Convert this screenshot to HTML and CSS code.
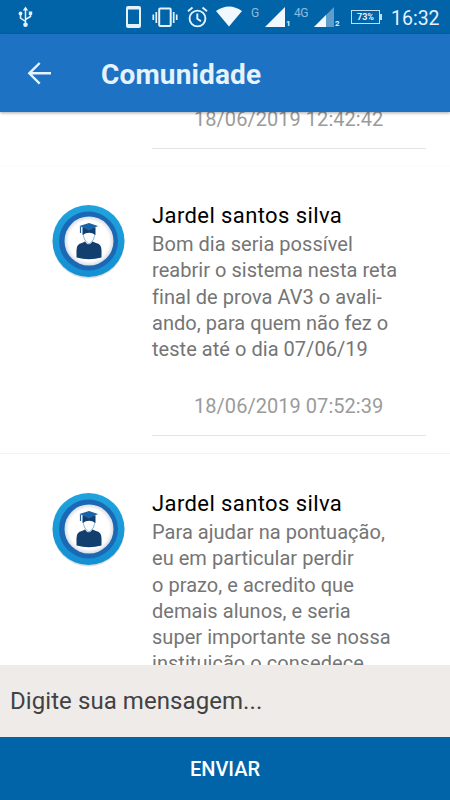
FILE: index.html
```html
<!DOCTYPE html>
<html lang="pt-BR">
<head>
    <meta charset="UTF-8">
    <meta name="viewport" content="width=device-width, initial-scale=1.0">
    <title>Comunidade</title>
    <link rel="stylesheet" href="styles.css">
</head>
<body>
    <svg class="defs" width="0" height="0">
        <defs>
            <linearGradient id="ring" x1="0" y1="0" x2="0" y2="1">
                <stop offset="0" stop-color="#1fa3dd"/>
                <stop offset="1" stop-color="#158fd2"/>
            </linearGradient>
            <radialGradient id="disc">
                <stop offset="0.82" stop-color="#ffffff"/>
                <stop offset="1" stop-color="#d9dde4"/>
            </radialGradient>
            <symbol id="student" viewBox="0 0 74 76">
                <circle cx="37.500" cy="38.500" r="36" fill="#9aa5ad" opacity="0.35"/>
                <circle cx="37.500" cy="37" r="36" fill="url(#ring)"/>
                <circle cx="37.500" cy="37" r="29.500" fill="#1b69b5"/>
                <circle cx="38" cy="37" r="24.500" fill="url(#disc)"/>
                <path d="M25.500 53.500 V46 Q25.500 40 31 39 L34 37.500 Q37.500 43 41.500 37.500 L45 39 Q50.500 40 50.500 46 V53.500 Q38 57 25.500 53.500Z" fill="#123f6d"/>
                <path d="M32.500 28 Q31.500 36 38 40 Q44.500 36 43.500 28" fill="#fff" stroke="#6aa5d4" stroke-width="0.800"/>
                <path d="M31.500 23.500 H44.500 V31 Q38 26.500 31.500 31Z" fill="#123f6d"/>
                <path d="M28.500 22 L38 19 L47 22 L38 26.500Z" fill="#1b62a8"/>
                <path d="M29.500 22.500 V29" stroke="#1b62a8" stroke-width="1.200"/>
            </symbol>
        </defs>
    </svg>

    <div class="screen">
        <div class="status-bar">
            <svg class="usb" width="15" height="22" viewBox="0 0 15 22" fill="none" stroke="#e3f2fd" stroke-width="1.500">
                <path d="M7.500 18V3M7.500 15.500L2.500 12V8M7.500 13.500L12.500 10.500V7"/>
                <path d="M4.800 4.500L7.500 0.500L10.200 4.500Z" fill="#e3f2fd" stroke="none"/>
                <circle cx="7.500" cy="18.800" r="2.300" fill="#e3f2fd" stroke="none"/>
                <circle cx="2.500" cy="7.500" r="1.900" fill="#e3f2fd" stroke="none"/>
                <path d="M10.800 5.500h3.400v3.400h-3.400z" fill="#e3f2fd" stroke="none"/>
            </svg>
            <svg class="phone" width="15" height="23" viewBox="0 0 15 23">
                <path fill="#e3f2fd" fill-rule="evenodd" d="M2 0H13Q15 0 15 2V20Q15 22 13 22H2Q0 22 0 20V2Q0 0 2 0ZM2 3.500V18H13V3.500Z"/>
            </svg>
            <svg class="vibrate" width="26" height="22" viewBox="0 0 26 22" fill="none" stroke="#e3f2fd">
                <rect x="7.200" y="1.500" width="11.500" height="17.500" rx="1" stroke-width="2"/>
                <path d="M4.300 5V16M1.300 7.500V13M21.700 5V16M24.700 7.500V13" stroke-width="1.700"/>
            </svg>
            <svg class="alarm" width="21" height="22" viewBox="0 0 21 22" fill="none" stroke="#e3f2fd" stroke-width="1.900">
                <circle cx="10.500" cy="12.500" r="7.900"/>
                <path d="M10.300 7.500V12.800L14 15.300M1 5.300L5.500 1.500M20 5.300L15.500 1.500"/>
            </svg>
            <svg class="wifi" width="26" height="21" viewBox="0 0 26 21">
                <path fill="#f1f8ff" d="M0 5Q13-4 26 5L13 20.500Z"/>
            </svg>
            <span class="net">G</span>
            <svg class="signal" width="20" height="20" viewBox="0 0 20 20">
                <path fill="#f1f8ff" d="M0 20L20 0V20Z"/>
            </svg>
            <span class="sim">1</span>
            <span class="net net-4g">4G</span>
            <svg class="signal" width="20" height="20" viewBox="0 0 20 20">
                <path fill="#5f9dcb" d="M0 20L20 0V20Z"/>
                <path fill="#f1f8ff" d="M0 20L12 8V20Z"/>
            </svg>
            <span class="sim">2</span>
            <span class="battery">73%</span>
            <span class="clock">16:32</span>
        </div>

        <div class="app-bar">
            <svg width="24" height="24" viewBox="0 0 24 24" fill="none" stroke="#e6f2fc" stroke-width="2.400">
                <path d="M24 12.300H2.500M12.700 2L2.300 12.300L12.700 22.600"/>
            </svg>
            <h1>Comunidade</h1>
        </div>

        <div class="feed">
            <div class="message message-cut">
                <div class="content">
                    <div class="date">18/06/2019 12:42:42</div>
                </div>
            </div>

            <div class="message">
                <svg class="avatar" width="74" height="76"><use href="#student"/></svg>
                <div class="content">
                    <h2>Jardel santos silva</h2>
                    <p>Bom dia seria possível<br>
                    reabrir o sistema nesta reta<br>
                    final de prova AV3 o avali-<br>
                    ando, para quem não fez o<br>
                    teste até o dia 07/06/19</p>
                    <div class="date">18/06/2019 07:52:39</div>
                </div>
            </div>

            <div class="message">
                <svg class="avatar" width="74" height="76"><use href="#student"/></svg>
                <div class="content">
                    <h2>Jardel santos silva</h2>
                    <p>Para ajudar na pontuação,<br>
                    eu em particular perdir<br>
                    o prazo, e acredito que<br>
                    demais alunos, e seria<br>
                    super importante se nossa<br>
                    instituição o consedece</p>
                </div>
            </div>
        </div>

        <input class="message-input" type="text" placeholder="Digite sua mensagem...">
        <button class="send">ENVIAR</button>
    </div>
</body>
</html>
```
FILE: styles.css
```css
* {
    box-sizing: border-box;
}
body {
    margin: 0;
    font-family: Roboto, sans-serif;
    background: #fff;
}
.defs {
    position: absolute;
}
.screen {
    width: 450px;
    height: 800px;
    display: flex;
    flex-direction: column;
    overflow: hidden;
}
.status-bar {
    height: 34px;
    flex-shrink: 0;
    display: flex;
    align-items: flex-start;
    padding: 6px 0 0 18px;
    background: #0164a9;
    color: #e3f2fd;
}
.status-bar > * {
    flex-shrink: 0;
}
.phone {
    margin-left: 93px;
}
.vibrate {
    margin: 1px 0 0 11px;
}
.alarm {
    margin-left: 9px;
}
.wifi {
    margin-left: 8px;
}
.net {
    width: 14px;
    margin-left: 9px;
    font-size: 12px;
    line-height: 15px;
    letter-spacing: -0.5px;
    color: #8abce0;
}
.net-4g {
    width: 20px;
    margin-left: 2px;
}
.signal {
    margin-top: 1px;
}
.sim {
    width: 7px;
    margin-top: 13px;
    padding-left: 1px;
    font-size: 8px;
    line-height: 9px;
    font-weight: bold;
}
.battery {
    position: relative;
    width: 29px;
    height: 14px;
    margin: 4px 0 0 10px;
    border: 1px solid #c4def1;
    font-size: 9px;
    line-height: 13px;
    font-weight: bold;
    text-align: center;
}
.battery::after {
    content: "";
    position: absolute;
    top: 3px;
    right: -3px;
    width: 2px;
    height: 6px;
    background: #c4def1;
}
.clock {
    margin-left: 11px;
    font-size: 19.5px;
    line-height: 25px;
}
.app-bar {
    position: relative;
    z-index: 1;
    height: 78px;
    flex-shrink: 0;
    display: flex;
    align-items: center;
    padding-left: 27px;
    background: #1d72c4;
    box-shadow: 0 1px 3px rgba(0,0,0,0.35);
}
.app-bar h1 {
    margin: 3px 0 0 50px;
    font-size: 28px;
    line-height: 34px;
    font-weight: bold;
    letter-spacing: 0.15px;
    color: #e6f2fc;
}
.feed {
    flex: 1;
    min-height: 0;
    overflow: hidden;
}
.message {
    height: 288px;
    display: flex;
    align-items: flex-start;
    padding: 37px 24px 0 51px;
    border-bottom: 1px solid #f3f3f3;
}
.message-cut {
    height: 54px;
    padding: 0 24px 0 152px;
    border-color: #fbfbfb;
}
.avatar {
    flex-shrink: 0;
    margin: 1px 27px 0 0;
}
.content {
    flex: 1;
}
h2 {
    margin: 0;
    font-size: 22px;
    line-height: 26px;
    font-weight: normal;
    letter-spacing: 0.4px;
    color: #000;
}
p {
    margin: 2px 0 0;
    font-size: 20px;
    line-height: 26.3px;
    letter-spacing: 0.04px;
    white-space: nowrap;
    color: #757575;
}
.date {
    height: 43px;
    margin-top: 31px;
    padding-left: 42px;
    font-size: 20px;
    line-height: 26px;
    letter-spacing: 0.04px;
    border-bottom: 1px solid #e4e4e4;
    color: #9b9b9b;
}
.message-cut .date {
    margin-top: -6px;
}
.message-input {
    height: 72px;
    flex-shrink: 0;
    padding: 0 10px;
    border: 0;
    border-radius: 0;
    background: #efebe9;
    font-family: inherit;
    font-size: 24px;
    letter-spacing: 0.07px;
}
.message-input::placeholder {
    color: #424242;
}
.send {
    height: 63px;
    flex-shrink: 0;
    padding: 0;
    border: 0;
    background: #0164a9;
    color: #fff;
    font-family: inherit;
    font-size: 20px;
    font-weight: 500;
}
```
